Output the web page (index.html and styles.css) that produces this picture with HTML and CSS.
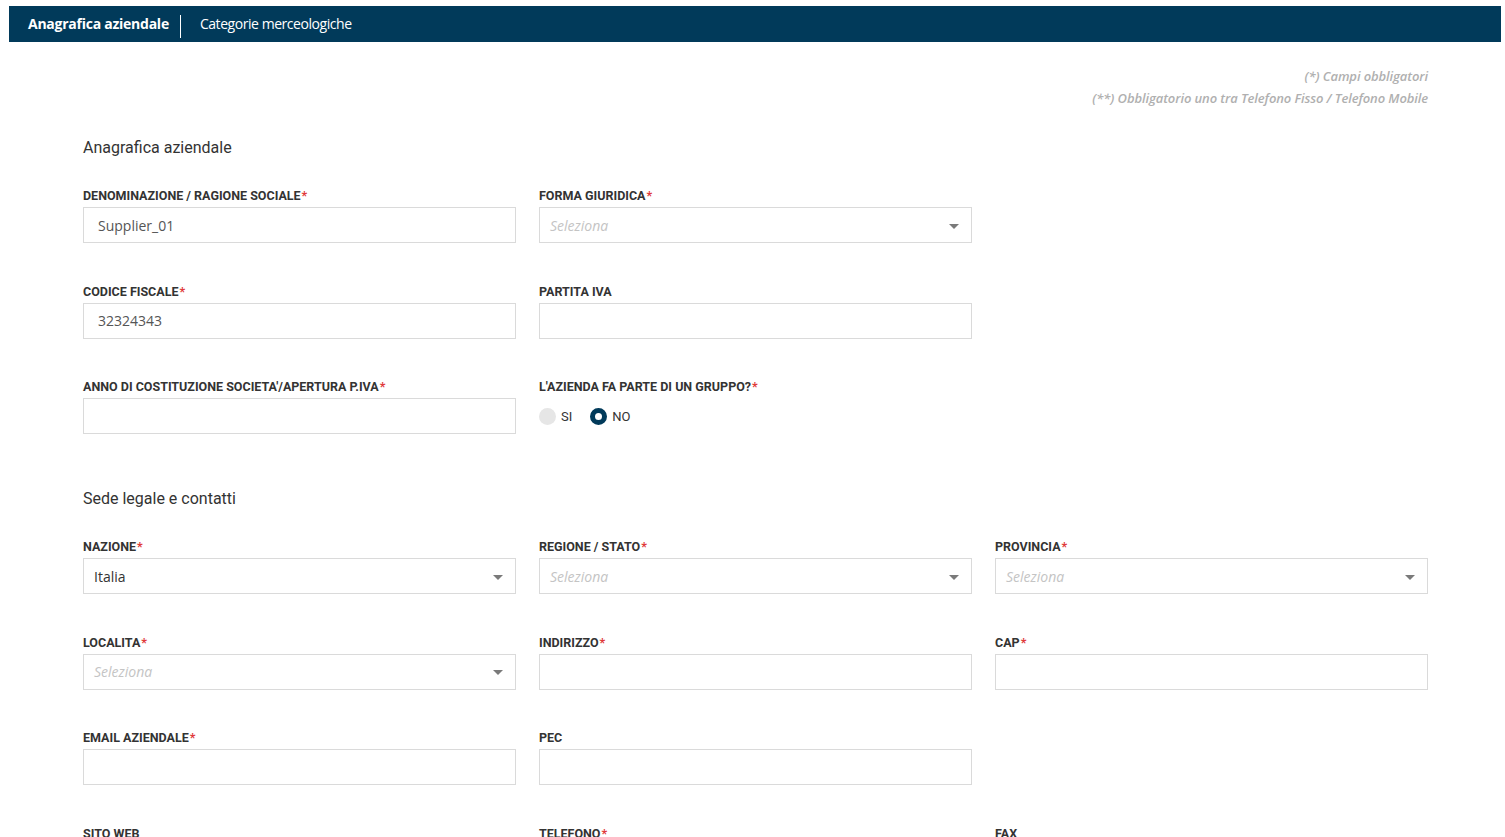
FILE: index.html
```html
<!DOCTYPE html>
<html lang="it">
<head>
<meta charset="utf-8">
<title>Anagrafica aziendale</title>
<link rel="stylesheet" href="styles.css">
</head>
<body>
<div class="page">
  <nav class="tabs">
    <span class="tab active">Anagrafica aziendale</span>
    <span class="sep"></span>
    <span class="tab">Categorie merceologiche</span>
  </nav>
  <div class="notes">
    <div>(*) Campi obbligatori</div>
    <div>(**) Obbligatorio uno tra Telefono Fisso / Telefono Mobile</div>
  </div>
  <main class="form">
    <h2 class="section-title">Anagrafica aziendale</h2>
    <div class="grid">
      <div class="field">
        <label class="label">DENOMINAZIONE / RAGIONE SOCIALE<span class="req">*</span></label>
        <div class="input text">Supplier_01</div>
      </div>
      <div class="field">
        <label class="label">FORMA GIURIDICA<span class="req">*</span></label>
        <div class="input select"><span class="ph">Seleziona</span><span class="caret"></span></div>
      </div>
      <div class="field"></div>

      <div class="field">
        <label class="label">CODICE FISCALE<span class="req">*</span></label>
        <div class="input text">32324343</div>
      </div>
      <div class="field">
        <label class="label">PARTITA IVA</label>
        <div class="input text"></div>
      </div>
      <div class="field"></div>

      <div class="field">
        <label class="label">ANNO DI COSTITUZIONE SOCIETA'/APERTURA P.IVA<span class="req">*</span></label>
        <div class="input text"></div>
      </div>
      <div class="field">
        <label class="label">L'AZIENDA FA PARTE DI UN GRUPPO?<span class="req">*</span></label>
        <div class="radios">
          <span class="radio"><span class="dot off"></span>SI</span>
          <span class="radio"><span class="dot on"></span>NO</span>
        </div>
      </div>
      <div class="field"></div>
    </div>

    <h2 class="section-title second">Sede legale e contatti</h2>
    <div class="grid">
      <div class="field">
        <label class="label">NAZIONE<span class="req">*</span></label>
        <div class="input select"><span class="val">Italia</span><span class="caret"></span></div>
      </div>
      <div class="field">
        <label class="label">REGIONE / STATO<span class="req">*</span></label>
        <div class="input select"><span class="ph">Seleziona</span><span class="caret"></span></div>
      </div>
      <div class="field">
        <label class="label">PROVINCIA<span class="req">*</span></label>
        <div class="input select"><span class="ph">Seleziona</span><span class="caret"></span></div>
      </div>

      <div class="field">
        <label class="label">LOCALITA<span class="req">*</span></label>
        <div class="input select"><span class="ph">Seleziona</span><span class="caret"></span></div>
      </div>
      <div class="field">
        <label class="label">INDIRIZZO<span class="req">*</span></label>
        <div class="input text"></div>
      </div>
      <div class="field">
        <label class="label">CAP<span class="req">*</span></label>
        <div class="input text"></div>
      </div>

      <div class="field">
        <label class="label">EMAIL AZIENDALE<span class="req">*</span></label>
        <div class="input text"></div>
      </div>
      <div class="field">
        <label class="label">PEC</label>
        <div class="input text"></div>
      </div>
      <div class="field"></div>

      <div class="field">
        <label class="label">SITO WEB</label>
        <div class="input text"></div>
      </div>
      <div class="field">
        <label class="label">TELEFONO<span class="req">*</span></label>
        <div class="input text"></div>
      </div>
      <div class="field">
        <label class="label">FAX</label>
        <div class="input text"></div>
      </div>
    </div>
  </main>
</div>
</body>
</html>
```

FILE: styles.css
```css
html, body {
  margin: 0;
  padding: 0;
  background: #ffffff;
  overflow: hidden;
}
body {
  font-family: Roboto, "Liberation Sans", sans-serif;
  color: #333333;
}
.page {
  padding: 6px 4px 0 9px;
}
.tabs {
  display: flex;
  align-items: center;
  height: 36px;
  background: #013a5a;
  padding-left: 19px;
  font-family: "Open Sans", sans-serif;
  font-size: 14px;
  color: #ffffff;
}
.tab {
  letter-spacing: -0.45px;
  line-height: 20px;
  margin-top: -1px;
}
.tab.active {
  font-weight: 700;
  letter-spacing: -0.25px;
}
.sep {
  width: 1px;
  height: 23px;
  background: #ffffff;
  margin: 4px 19px 0 11px;
  align-self: center;
}
.notes {
  margin-top: 23px;
  padding-right: 73px;
  text-align: right;
  font-family: "Open Sans", sans-serif;
  font-style: italic;
  font-weight: 600;
  font-size: 13px;
  line-height: 22px;
  color: #b0b0b0;
  letter-spacing: -0.1px;
}
.form {
  padding: 0 64px 0 74px;
}
.section-title {
  margin: 27px 0 0 0;
  font-size: 16px;
  font-weight: 400;
  line-height: 24px;
  color: #333333;
}
.section-title.second {
  margin-top: 36px;
}
.grid {
  display: grid;
  grid-template-columns: 433px 433px 433px;
  column-gap: 23px;
  row-gap: 23.5px;
  margin-top: 28px;
}
.field {
  display: flex;
  flex-direction: column;
  min-height: 72px;
}
.label {
  font-size: 12.5px;
  font-weight: 700;
  line-height: 16px;
  color: #333333;
  margin-bottom: 3px;
}
.req {
  color: #e03a3a;
  margin-left: 1px;
}
.input {
  box-sizing: border-box;
  height: 36px;
  border: 1px solid #dadada;
  background: #ffffff;
  display: flex;
  align-items: center;
  font-size: 14px;
}
.input.text {
  padding-left: 14px;
  font-family: "Open Sans", sans-serif;
  color: #555555;
}
.input.select {
  padding: 0 12px 0 10px;
  justify-content: space-between;
}
.ph {
  font-family: "Open Sans", sans-serif;
  font-style: italic;
  font-weight: 400;
  color: #c4c4c4;
}
.val {
  color: #333333;
  font-family: "Open Sans", sans-serif;
}
.caret {
  width: 0;
  height: 0;
  border-left: 5px solid transparent;
  border-right: 5px solid transparent;
  border-top: 5px solid #7a7a7a;
  margin-top: 2px;
}
.radios {
  display: flex;
  align-items: center;
  gap: 18px;
  margin-top: 8px;
  height: 20px;
}
.radio {
  display: flex;
  align-items: center;
  gap: 5px;
  font-size: 13px;
  color: #333333;
}
.dot {
  box-sizing: border-box;
  width: 17px;
  height: 17px;
  border-radius: 50%;
}
.dot.off {
  background: #e6e6e6;
}
.dot.on {
  background: #ffffff;
  border: 5px solid #013a5a;
}
```
